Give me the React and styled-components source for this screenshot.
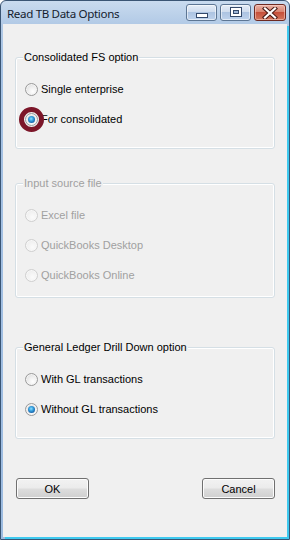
import React from 'react';
import styled, { createGlobalStyle, css } from 'styled-components';

const Global = createGlobalStyle`
  html, body { margin: 0; padding: 0; background: #ffffff; }
  body { font-family: "Liberation Sans", Arial, sans-serif; }
`;

const Window = styled.div`
  width: 290px;
  height: 540px;
  box-sizing: border-box;
  display: flex;
  flex-direction: column;
  border: 1px solid #3a5574;
  border-radius: 6px 6px 0 0;
  padding: 0 2px 2px 2px;
  overflow: hidden;
  background: linear-gradient(to bottom, #c9dbef 0px, #b2cae6 23px, #a6c2e3 60px, #9cbbe0 100%);
`;

const TitleBar = styled.div`
  height: 23px;
  display: flex;
  align-items: flex-start;
  justify-content: space-between;
  padding: 0 1px 0 4px;
`;

const Title = styled.div`
  font-family: "Noto Sans", "Open Sans", sans-serif;
  font-size: 11.6px;
  line-height: 16px;
  margin-top: 5px;
  color: #141c2e;
  letter-spacing: -0.35px;
`;

const CaptionButtons = styled.div`
  display: flex;
  gap: 3px;
  margin-top: 3px;
`;

const CaptionButton = styled.div`
  width: ${p => p.$w}px;
  height: 17px;
  box-sizing: border-box;
  border: 1px solid #5d7694;
  border-radius: 3px;
  display: flex;
  align-items: center;
  justify-content: center;
  box-shadow: inset 0 0 0 1px rgba(255,255,255,0.55);
  background: linear-gradient(to bottom, #e6eef8 0%, #cfdcee 45%, #adc4e2 50%, #bed2ec 100%);
  ${p => p.$close && css`
    border-color: #6e2a22;
    box-shadow: inset 0 0 0 1px rgba(255,220,210,0.5);
    background: linear-gradient(to bottom, #eab2a6 0%, #d98571 45%, #c6503a 50%, #d2765d 100%);
  `}
`;

const Client = styled.div`
  flex: 1;
  background: #f0f0f0;
  box-shadow: 2px 2px 0 #3ec9ef;
  display: flex;
  flex-direction: column;
  padding: 0 12px;
`;

const Group = styled.div`
  position: relative;
  box-sizing: border-box;
  height: ${p => p.$h}px;
  margin-top: ${p => p.$top}px;
  border: 1px solid #d5dfe5;
  border-radius: 3px;
  box-shadow: inset 0 0 0 1px #ffffff;
  padding: 25px 0 0 9px;
`;

const Legend = styled.span`
  position: absolute;
  top: -7px;
  left: 7px;
  padding: 0 1px;
  background: #f0f0f0;
  font-size: 11px;
  line-height: 13px;
  color: ${p => (p.$disabled ? '#a0a0a0' : '#000000')};
`;

const RadioList = styled.div`
  display: flex;
  flex-direction: column;
  gap: 17px;
`;

const Row = styled.label`
  display: flex;
  align-items: center;
  gap: 3px;
  height: 13px;
  font-size: 11px;
  line-height: 13px;
  color: ${p => (p.$disabled ? '#a0a0a0' : '#000000')};
`;

const Radio = styled.span`
  position: relative;
  width: 13px;
  height: 13px;
  box-sizing: border-box;
  border-radius: 50%;
  flex-shrink: 0;
  border: 1px solid ${p => (p.$disabled ? '#cfcfcf' : '#9a9a9a')};
  background: ${p =>
    p.$disabled
      ? 'radial-gradient(circle at 60% 65%, #fbfbfb 0%, #f0f0f0 60%, #e6e6e6 100%)'
      : 'radial-gradient(circle at 62% 68%, #ffffff 0%, #eeeeee 45%, #d4d4d4 100%)'};
  box-shadow: inset 0 0 0 1px ${p => (p.$disabled ? '#f7f7f7' : '#f4f4f4')};
  ${p => p.$checked && css`
    &::after {
      content: '';
      position: absolute;
      left: 2px;
      top: 2px;
      width: 7px;
      height: 7px;
      border-radius: 50%;
      background: radial-gradient(circle at 45% 40%, #8fe0ff 0%, #3aa3e0 35%, #135ea6 75%, #0b3f74 100%);
    }
  `}
  ${p => p.$marked && css`
    &::before {
      content: '';
      position: absolute;
      left: -7px;
      top: -7px;
      width: 25px;
      height: 25px;
      box-sizing: border-box;
      border-radius: 50%;
      border: 5px solid #7c1629;
    }
  `}
`;

const ButtonRow = styled.div`
  display: flex;
  justify-content: space-between;
  margin-top: 39px;
  padding-left: 1px;
`;

const PushButton = styled.button`
  width: 73px;
  height: 21px;
  box-sizing: border-box;
  border: 1px solid #707070;
  border-radius: 3px;
  padding: 0;
  font-family: "Liberation Sans", Arial, sans-serif;
  font-size: 11px;
  color: #000;
  box-shadow: inset 0 0 0 1px #fcfcfc;
  background: linear-gradient(to bottom, #f2f2f2 0%, #ebebeb 48%, #dddddd 52%, #cfcfcf 100%);
`;

const groups = [
  {
    title: 'Consolidated FS option', top: 33, h: 92,
    items: [
      { label: 'Single enterprise' },
      { label: 'For consolidated', checked: true, marked: true },
    ],
  },
  {
    title: 'Input source file', top: 34, h: 115, disabled: true,
    items: [
      { label: 'Excel file' },
      { label: 'QuickBooks Desktop' },
      { label: 'QuickBooks Online' },
    ],
  },
  {
    title: 'General Ledger Drill Down option', top: 49, h: 92,
    items: [
      { label: 'With GL transactions' },
      { label: 'Without GL transactions', checked: true },
    ],
  },
];

export default function App() {
  return (
    <>
      <Global />
      <Window>
        <TitleBar>
          <Title>Read TB Data Options</Title>
          <CaptionButtons>
            <CaptionButton $w={31}>
              <svg width="12" height="15" viewBox="0 0 12 15">
                <rect x="0.5" y="8.5" width="11" height="4" fill="#ffffff" stroke="#34496a" />
              </svg>
            </CaptionButton>
            <CaptionButton $w={31}>
              <svg width="12" height="11" viewBox="0 0 12 11">
                <rect x="0.5" y="0.5" width="11" height="9" fill="#ffffff" stroke="#34496a" />
                <rect x="3.5" y="3.5" width="5" height="3" fill="#9db5d6" stroke="#34496a" />
              </svg>
            </CaptionButton>
            <CaptionButton $w={32} $close>
              <svg width="16" height="12" viewBox="0 0 16 12">
                <path d="M3 1.5 L13 10.5 M13 1.5 L3 10.5" stroke="#4a1a14" strokeWidth="4.2" strokeLinecap="square" />
                <path d="M3 1.5 L13 10.5 M13 1.5 L3 10.5" stroke="#ffffff" strokeWidth="2.2" strokeLinecap="square" />
              </svg>
            </CaptionButton>
          </CaptionButtons>
        </TitleBar>
        <Client>
          {groups.map(g => (
            <Group key={g.title} $top={g.top} $h={g.h}>
              <Legend $disabled={g.disabled}>{g.title}</Legend>
              <RadioList>
                {g.items.map(it => (
                  <Row key={it.label} $disabled={g.disabled}>
                    <Radio $disabled={g.disabled} $checked={it.checked} $marked={it.marked} />
                    <span>{it.label}</span>
                  </Row>
                ))}
              </RadioList>
            </Group>
          ))}
          <ButtonRow>
            <PushButton>OK</PushButton>
            <PushButton>Cancel</PushButton>
          </ButtonRow>
        </Client>
      </Window>
    </>
  );
}
